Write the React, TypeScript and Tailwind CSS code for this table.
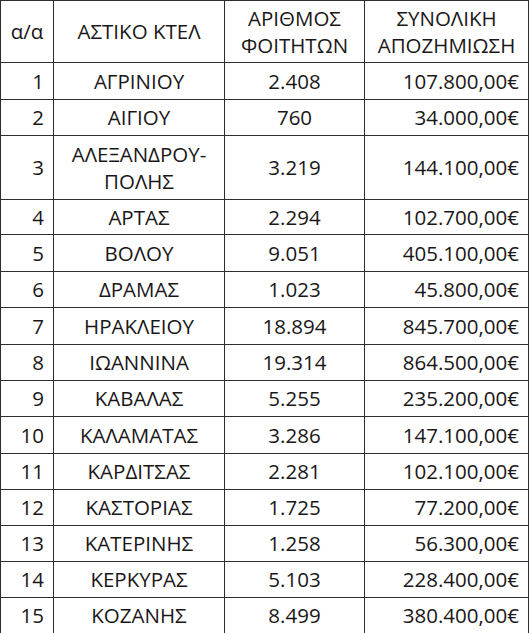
import React from "react";

const rows: [string, string[], string, string, number][] = [
  ["1", ["ΑΓΡΙΝΙΟΥ"], "2.408", "107.800,00€", 36],
  ["2", ["ΑΙΓΙΟΥ"], "760", "34.000,00€", 35],
  ["3", ["ΑΛΕΞΑΝΔΡΟΥ-", "ΠΟΛΗΣ"], "3.219", "144.100,00€", 63],
  ["4", ["ΑΡΤΑΣ"], "2.294", "102.700,00€", 34],
  ["5", ["ΒΟΛΟΥ"], "9.051", "405.100,00€", 36],
  ["6", ["ΔΡΑΜΑΣ"], "1.023", "45.800,00€", 35],
  ["7", ["ΗΡΑΚΛΕΙΟΥ"], "18.894", "845.700,00€", 36],
  ["8", ["ΙΩΑΝΝΙΝΑ"], "19.314", "864.500,00€", 35],
  ["9", ["ΚΑΒΑΛΑΣ"], "5.255", "235.200,00€", 35],
  ["10", ["ΚΑΛΑΜΑΤΑΣ"], "3.286", "147.100,00€", 36],
  ["11", ["ΚΑΡΔΙΤΣΑΣ"], "2.281", "102.100,00€", 35],
  ["12", ["ΚΑΣΤΟΡΙΑΣ"], "1.725", "77.200,00€", 35],
  ["13", ["ΚΑΤΕΡΙΝΗΣ"], "1.258", "56.300,00€", 35],
  ["14", ["ΚΕΡΚΥΡΑΣ"], "5.103", "228.400,00€", 35],
  ["15", ["ΚΟΖΑΝΗΣ"], "8.499", "380.400,00€", 35],
];

export default function App() {
  const cell = "bg-white flex items-center";
  return (
    <div
      className="w-[529px] bg-white text-[#1a1718] text-[20.5px] leading-[27px]"
      style={{ fontFamily: '"Open Sans", "DejaVu Sans", sans-serif' }}
    >
      <div className="grid grid-cols-[52px_170px_139px_163px] gap-px bg-[#2e2e2e] p-px">
        <div className={`${cell} h-[61px] justify-center`}>α/α</div>
        <div className={`${cell} justify-center`}>ΑΣΤΙΚΟ ΚΤΕΛ</div>
        <div className={`${cell} justify-center text-center`}>
          ΑΡΙΘΜΟΣ
          <br />
          ΦΟΙΤΗΤΩΝ
        </div>
        <div className={`${cell} justify-center text-center`}>
          ΣΥΝΟΛΙΚΗ
          <br />
          ΑΠΟΖΗΜΙΩΣΗ
        </div>
        {rows.map(([n, name, s, a, h]) => (
          <React.Fragment key={n}>
            <div className={`${cell} justify-end pr-[9px]`} style={{ height: h }}>
              {n}
            </div>
            <div className={`${cell} justify-center text-center flex-col`}>
              {name.map((l) => (
                <span key={l}>{l}</span>
              ))}
            </div>
            <div className={`${cell} justify-center`}>{s}</div>
            <div className={`${cell} justify-end pr-[9px]`}>{a}</div>
          </React.Fragment>
        ))}
      </div>
    </div>
  );
}
